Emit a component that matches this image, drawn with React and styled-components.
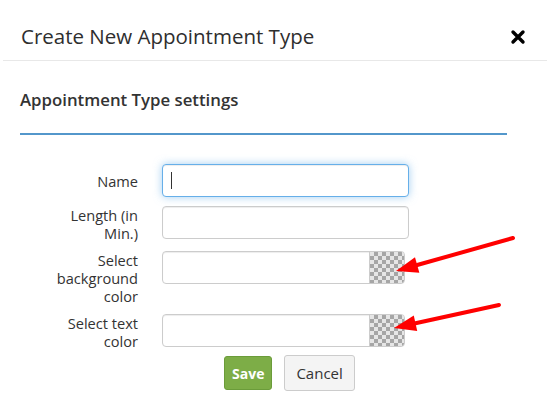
import styled, { createGlobalStyle } from "styled-components";

const Global = createGlobalStyle`
  body {
    margin: 0;
    background: #fff;
    font-family: "Open Sans", "Noto Sans", "DejaVu Sans", sans-serif;
    color: #333;
  }
`

const Modal = styled.div`
  position: relative;
  width: 547px;
  height: 408px;
  overflow: hidden;
`

const Header = styled.div`
  display: flex;
  align-items: center;
  justify-content: space-between;
  height: 61px;
  margin-left: 3px;
  padding: 0 21px 0 18px;
  border-bottom: 1px solid #e8e8e8;
  box-sizing: border-box;
`

const Title = styled.h4`
  margin: 11px 0 0;
  font-size: 20.5px;
  font-weight: 500;
  color: #2e2e2e;
`

const Close = styled.button`
  border: 0;
  background: none;
  padding: 0;
  margin-top: 14px;
  width: 16px;
  height: 16px;
  cursor: pointer;
`

const Body = styled.div`
  padding: 27px 40px 0 20px;
`

const SectionTitle = styled.h5`
  margin: 0;
  font-size: 16.8px;
  font-weight: 600;
  line-height: 24px;
  color: #333;
  padding-bottom: 21px;
  border-bottom: 2px solid #5397cb;
`

const Form = styled.form`
  display: grid;
  grid-template-columns: 100px 247px;
  column-gap: 24px;
  row-gap: 9px;
  margin: 29px 0 0 18px;
`

const Label = styled.label`
  text-align: right;
  font-size: 14.6px;
  line-height: 18px;
  color: #333;
  align-self: ${(p) => (p.$center ? "center" : "start")};
`

const Input = styled.input`
  box-sizing: border-box;
  width: 247px;
  height: 33px;
  padding: 6px 10px;
  font-size: 14px;
  border: 1px solid ${(p) => (p.$focus ? "#66afe9" : "#ccc")};
  border-radius: 4px;
  outline: none;
  box-shadow: ${(p) =>
    p.$focus
      ? "inset 0 1px 1px rgba(0,0,0,.075), 0 0 8px rgba(102,175,233,.6)"
      : "inset 0 1px 1px rgba(0,0,0,.075)"};
`

const FieldWrap = styled.div`
  position: relative;
  display: flex;
  width: 247px;
`

const Caret = styled.span`
  position: absolute;
  left: 9px;
  top: 8px;
  width: 1px;
  height: 17px;
  background: #333;
`

const ColorGroup = styled.div`
  display: flex;
  width: 243px;
  height: 33px;
  box-sizing: border-box;
  border: 1px solid #ccc;
  border-radius: 4px;
  overflow: hidden;
  box-shadow: inset 0 1px 1px rgba(0,0,0,.075);
`

const ColorText = styled.input`
  flex: 1;
  min-width: 0;
  border: 0;
  outline: none;
  background: transparent;
  padding: 6px 10px;
  font-size: 14px;
`

const Swatch = styled.span`
  width: 34px;
  border-left: 1px solid #ccc;
  background-color: #e6e6e6;
  background-image: conic-gradient(
    #a6a6a6 25%, transparent 0 50%, #a6a6a6 0 75%, transparent 0
  );
  background-size: 8px 8px;
`

const Actions = styled.div`
  grid-column: 2;
  display: flex;
  gap: 12px;
  margin-top: -4px;
  padding-left: 62px;
  align-items: center;
`

const SaveButton = styled.button`
  height: 34px;
  padding: 0 7px;
  font-family: inherit;
  font-size: 14px;
  font-weight: 700;
  color: #fff;
  background: #7dad47;
  border: 1px solid #6b9c3a;
  border-radius: 3px;
  cursor: pointer;
`

const CancelButton = styled.button`
  height: 36px;
  padding: 0 11px;
  font-family: inherit;
  font-size: 15px;
  font-weight: 500;
  color: #333;
  background: #f4f4f4;
  border: 1px solid #ccc;
  border-radius: 3px;
  cursor: pointer;
`

const Arrows = styled.svg`
  position: absolute;
  left: 0;
  top: 0;
  pointer-events: none;
`

function Arrow({ x1, y1, x2, y2 }) {
  const a = Math.atan2(y2 - y1, x2 - x1)
  const len = 22
  const w = 8
  const bx = x2 - len * Math.cos(a)
  const by = y2 - len * Math.sin(a)
  const px = -Math.sin(a) * w
  const py = Math.cos(a) * w
  return (
    <>
      <line x1={x1} y1={y1} x2={bx} y2={by} stroke="#f00" strokeWidth="4" strokeLinecap="round" />
      <polygon points={`${x2},${y2} ${bx + px},${by + py} ${bx - px},${by - py}`} fill="#f00" />
    </>
  )
}

export default function App() {
  return (
    <>
      <Global />
      <Modal>
        <Header>
          <Title>Create New Appointment Type</Title>
          <Close aria-label="close">
            <svg width="16" height="16" viewBox="0 0 16 16">
              <path d="M3 3 L13 13 M13 3 L3 13" stroke="#000" strokeWidth="3.4" strokeLinecap="round" />
            </svg>
          </Close>
        </Header>
        <Body>
          <SectionTitle>Appointment Type settings</SectionTitle>
          <Form onSubmit={(e) => e.preventDefault()}>
            <Label $center>Name</Label>
            <FieldWrap>
              <Input $focus />
              <Caret />
            </FieldWrap>

            <Label>Length (in<br />Min.)</Label>
            <Input />

            <Label>Select<br />background<br />color</Label>
            <ColorGroup>
              <ColorText />
              <Swatch />
            </ColorGroup>

            <Label>Select text<br />color</Label>
            <ColorGroup>
              <ColorText />
              <Swatch />
            </ColorGroup>

            <Actions>
              <SaveButton type="submit">Save</SaveButton>
              <CancelButton type="button">Cancel</CancelButton>
            </Actions>
          </Form>
        </Body>
        <Arrows width="547" height="408">
          <Arrow x1={513} y1={238} x2={396} y2={271} />
          <Arrow x1={499} y1={305} x2={394} y2={328} />
        </Arrows>
      </Modal>
    </>
  )
}
